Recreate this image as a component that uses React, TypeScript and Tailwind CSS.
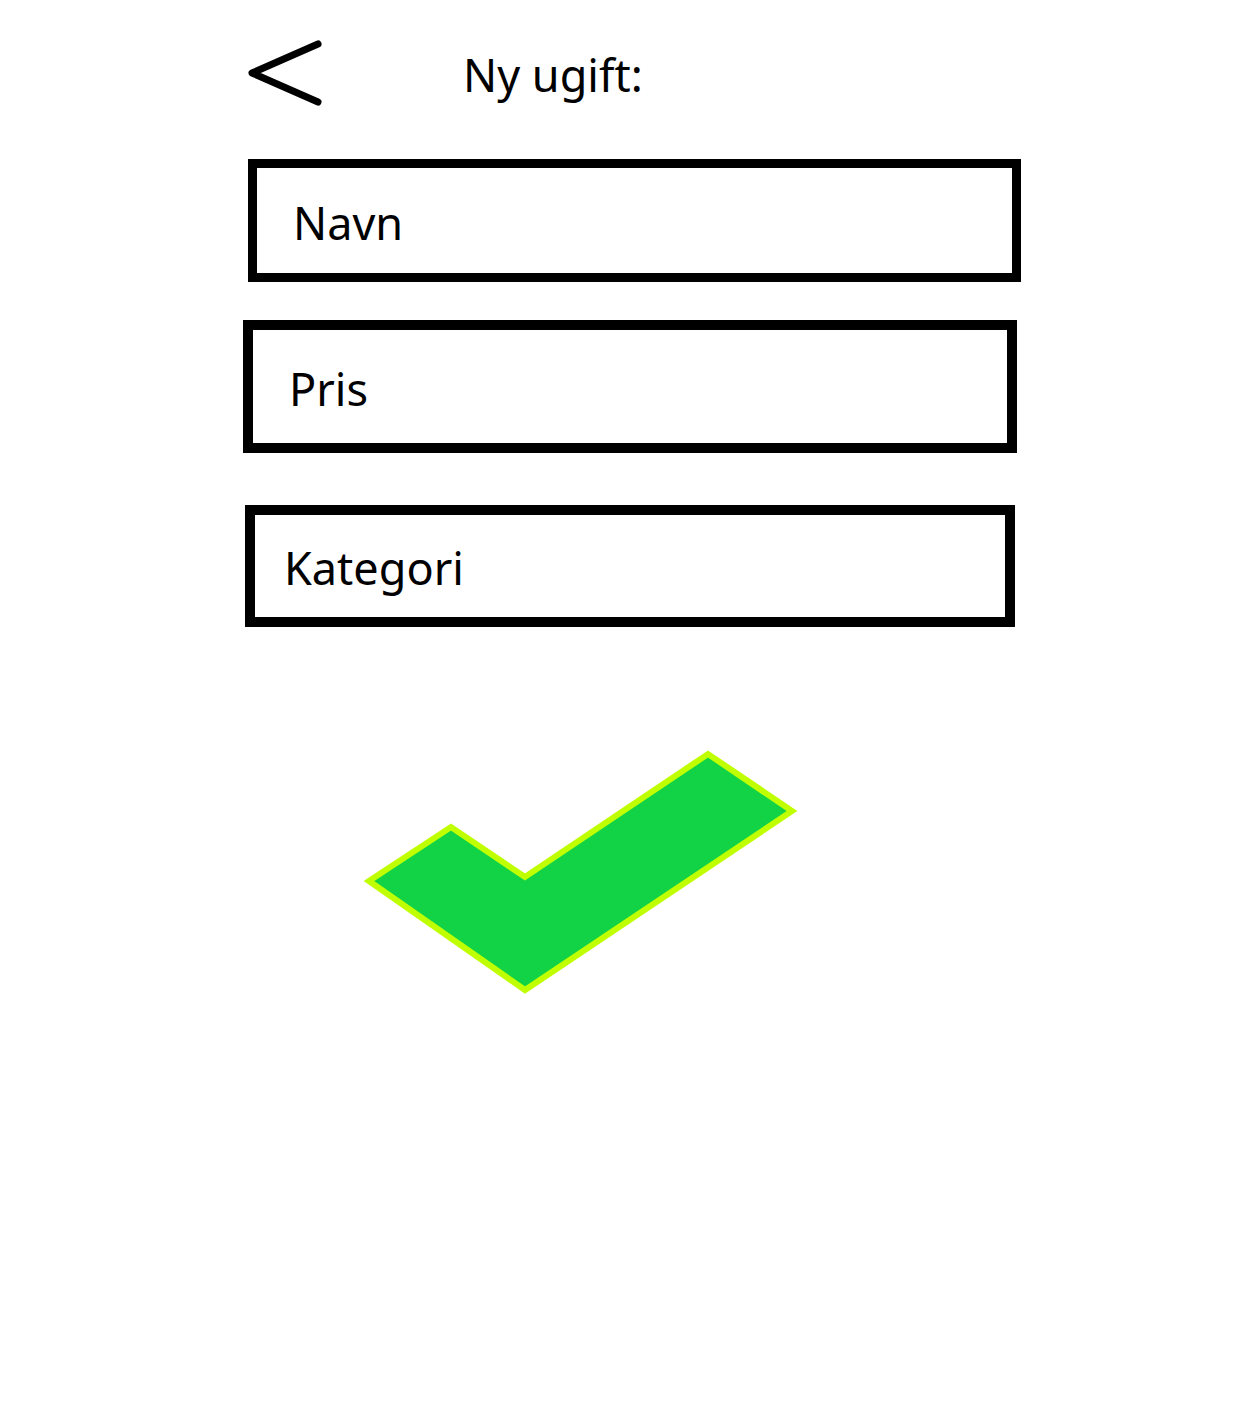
import React from "react";

export default function App() {
  return (
    <div className="min-h-[1424px] w-full bg-white text-black font-['Noto_Sans',sans-serif]">
      <div className="flex h-[159px] items-start">
        <svg className="ml-[246px] mt-[38px] shrink-0" width="80" height="70" viewBox="0 0 80 70" fill="none">
          <path d="M72 6 L6 35 L72 64" stroke="#000" strokeWidth="7" strokeLinecap="round" strokeLinejoin="round" />
        </svg>
        <div className="ml-[137px] mt-[47px] text-[45px] leading-[56px]">Ny ugift:</div>
      </div>

      <div className="ml-[248px] flex h-[123px] w-[773px] items-center border-[9px] border-black pl-[36px] pt-[4px] text-[45px] leading-[56px]">
        Navn
      </div>

      <div className="ml-[243px] mt-[38px] flex h-[133px] w-[774px] items-center border-[10px] border-black pl-[36px] pt-[4px] text-[45px] leading-[56px]">
        Pris
      </div>

      <div className="ml-[245px] mt-[52px] flex h-[122px] w-[770px] items-center border-[10px] border-black pl-[29px] pt-[4px] text-[45px] leading-[56px]">
        Kategori
      </div>

      <svg className="ml-[360px] mt-[118px] block" width="440" height="255" viewBox="0 0 440 255">
        <polygon
          points="9,136 91,82 165,132 348,9 432,66 165,245"
          fill="#12d345"
          stroke="#bfff00"
          strokeWidth="6"
          strokeLinejoin="miter"
        />
      </svg>
    </div>
  );
}
